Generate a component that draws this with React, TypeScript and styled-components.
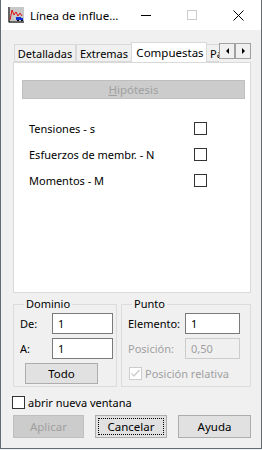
import styled, { createGlobalStyle } from "styled-components";

const Global = createGlobalStyle`
  html, body {
    margin: 0;
    padding: 0;
    background: #f0f0f0;
  }
  * {
    box-sizing: border-box;
  }
`;

const Window = styled.div`
  width: 262px;
  height: 449px;
  display: flex;
  flex-direction: column;
  background: #f0f0f0;
  border-left: 1px solid #646c73;
  border-right: 1px solid #646c73;
  border-bottom: 1px solid #646c73;
  font-family: "Noto Sans", "Open Sans", sans-serif;
  font-size: 11px;
  color: #000;
`;

const TitleBar = styled.div`
  height: 30px;
  flex: none;
  display: flex;
  align-items: center;
  background: #fff;
`;

const AppIcon = styled.svg`
  margin-left: 7px;
  flex: none;
`;

const Title = styled.div`
  margin-left: 6px;
  flex: 1;
  font-size: 11.5px;
  white-space: nowrap;
`;

const CaptionButton = styled.div`
  width: 46px;
  height: 30px;
  display: flex;
  align-items: center;
  justify-content: center;
  flex: none;
`;

const Content = styled.div`
  flex: 1;
  padding: 12px 10px 0 12px;
  display: flex;
  flex-direction: column;
`;

const TabHeader = styled.div`
  display: flex;
  height: 20px;
`;

const TabStrip = styled.div`
  width: 206px;
  overflow: hidden;
  display: flex;
  align-items: flex-end;
  padding-left: 1px;
`;

const Tab = styled.div<{ $active?: boolean; $w: number }>`
  flex: none;
  width: ${(p) => p.$w}px;
  height: ${(p) => (p.$active ? "21px" : "18px")};
  margin-bottom: ${(p) => (p.$active ? "-1px" : "0")};
  padding-top: ${(p) => (p.$active ? "2px" : "1px")};
  padding-left: ${(p) => (p.$active ? "2px" : "0")};
  text-align: center;
  background: ${(p) => (p.$active ? "#fff" : "#f0f0f0")};
  border: 1px solid #d9d9d9;
  border-bottom: ${(p) => (p.$active ? "none" : "1px solid #d9d9d9")};
  margin-left: ${(p) => (p.$active ? "-1px" : "0")};
  margin-right: ${(p) => (p.$active ? "-1px" : "0")};
  position: relative;
  z-index: ${(p) => (p.$active ? 1 : 0)};
  white-space: nowrap;
  line-height: 15px;
  font-size: ${(p) => (p.$active ? "11.5px" : "11px")};
`;

const ClippedTab = styled(Tab)`
  text-align: left;
  padding-left: 3px;
`;

const Spin = styled.div`
  display: flex;
  margin-top: 1px;
  height: 16px;
`;

const SpinButton = styled.div`
  width: 16px;
  height: 16px;
  background: #f0f0f0;
  border: 1px solid #a0a0a0;
  display: flex;
  align-items: center;
  justify-content: center;
`;

const Arrow = styled.div<{ $dir: "left" | "right" }>`
  width: 0;
  height: 0;
  border-top: 3px solid transparent;
  border-bottom: 3px solid transparent;
  ${(p) =>
    p.$dir === "left"
      ? "border-right: 3px solid #000;"
      : "border-left: 3px solid #000;"}
`;

const Panel = styled.div`
  width: 238px;
  height: 231px;
  background: #fff;
  border: 1px solid #d9d9d9;
  padding: 17px 5px 0 8px;
  display: flex;
  flex-direction: column;
`;

const Button = styled.div<{
  $w?: number;
  $h?: number;
  $disabled?: boolean;
  $focus?: boolean;
}>`
  width: ${(p) => (p.$w ? p.$w + "px" : "auto")};
  height: ${(p) => p.$h ?? 23}px;
  flex: none;
  display: flex;
  align-items: center;
  justify-content: center;
  background: ${(p) => (p.$disabled ? "#cccccc" : "#e1e1e1")};
  border: 1px solid ${(p) => (p.$disabled ? "#bfbfbf" : "#adadad")};
  color: ${(p) => (p.$disabled ? "#a0a0a0" : "#000")};
  font-size: 11.5px;
  position: relative;
  ${(p) =>
    p.$focus &&
    `
    &::after {
      content: "";
      position: absolute;
      inset: 2px;
      border: 1px dotted #000;
    }
  `}
`;

const Mnemonic = styled.span`
  text-decoration: underline;
`;

const CheckList = styled.div`
  margin-top: 23px;
  display: flex;
  flex-direction: column;
  gap: 13px;
`;

const CheckRow = styled.div`
  display: flex;
  align-items: center;
  height: 13px;
  padding-left: 7px;
`;

const CheckLabel = styled.span`
  width: 165px;
`;

const Box = styled.div<{ $disabled?: boolean }>`
  width: 13px;
  height: 13px;
  flex: none;
  border: 1px solid ${(p) => (p.$disabled ? "#cccccc" : "#333")};
  background: #fff;
  display: flex;
  align-items: center;
  justify-content: center;
`;

const Groups = styled.div`
  display: flex;
  gap: 4px;
  margin-top: 4px;
`;

const Group = styled.fieldset<{ $w: number }>`
  width: ${(p) => p.$w}px;
  height: 90px;
  margin: 0;
  padding: 2px 0 0 6px;
  border: 1px solid #dcdcdc;
  min-inline-size: 0;
  display: flex;
  flex-direction: column;
  gap: 4px;
`;

const Legend = styled.legend`
  padding: 0 2px;
  margin-left: 4px;
  line-height: 14px;
`;

const Field = styled.div`
  display: flex;
  align-items: center;
  height: 21px;
`;

const FieldLabel = styled.span<{ $w: number; $disabled?: boolean }>`
  width: ${(p) => p.$w}px;
  color: ${(p) => (p.$disabled ? "#a0a0a0" : "#000")};
`;

const Input = styled.div<{ $w: number; $disabled?: boolean }>`
  width: ${(p) => p.$w}px;
  height: 21px;
  border: 1px solid ${(p) => (p.$disabled ? "#cccccc" : "#7a7a7a")};
  background: ${(p) => (p.$disabled ? "#f0f0f0" : "#fff")};
  color: ${(p) => (p.$disabled ? "#a0a0a0" : "#000")};
  padding-left: 5px;
  line-height: 19px;
`;

const CheckField = styled.div<{ $disabled?: boolean }>`
  display: flex;
  align-items: center;
  gap: 3px;
  margin-top: 3px;
  margin-left: 1px;
  color: ${(p) => (p.$disabled ? "#a0a0a0" : "#000")};
`;

const BottomCheck = styled.div`
  display: flex;
  align-items: center;
  gap: 3px;
  margin-top: 8px;
  margin-left: -1px;
`;

const ButtonRow = styled.div`
  display: flex;
  gap: 11px;
  margin-top: 5px;
`;

function Check({ checked, disabled }: { checked?: boolean; disabled?: boolean }) {
  return (
    <Box $disabled={disabled}>
      {checked && (
        <svg width="11" height="11" viewBox="0 0 11 11">
          <path d="M1.5 5.5 L4 8 L9.5 2" fill="none" stroke="#cccccc" strokeWidth="1.3" />
        </svg>
      )}
    </Box>
  );
}

export default function App() {
  return (
    <>
      <Global />
      <Window>
        <TitleBar>
          <AppIcon width="16" height="16" viewBox="0 0 16 16">
            <rect x="0" y="0" width="16" height="16" fill="#c8c8c8" />
            <path d="M1 0 V15 H16" fill="none" stroke="#000" strokeWidth="1" />
            <path d="M2 13 L4 3 L6 8 L8 5 L10 9 L12 6 L14 9" fill="none" stroke="#e01010" strokeWidth="1" />
            <rect x="8" y="10" width="5" height="3" fill="#1030d0" />
            <rect x="11" y="11" width="4" height="2" fill="#1030d0" />
            <rect x="9" y="13" width="2" height="1" fill="#000" />
            <rect x="13" y="13" width="2" height="1" fill="#000" />
          </AppIcon>
          <Title>Línea de influe...</Title>
          <CaptionButton>
            <svg width="10" height="10" viewBox="0 0 10 10">
              <path d="M0 5.5 H10" stroke="#000" strokeWidth="1" />
            </svg>
          </CaptionButton>
          <CaptionButton>
            <svg width="10" height="10" viewBox="0 0 10 10">
              <rect x="0.5" y="0.5" width="9" height="9" fill="none" stroke="#cccccc" strokeWidth="1" />
            </svg>
          </CaptionButton>
          <CaptionButton>
            <svg width="11" height="11" viewBox="0 0 11 11">
              <path d="M0.5 0.5 L10.5 10.5 M10.5 0.5 L0.5 10.5" stroke="#000" strokeWidth="1" />
            </svg>
          </CaptionButton>
        </TitleBar>
        <Content>
          <TabHeader>
            <TabStrip>
              <Tab $w={62}>Detalladas</Tab>
              <Tab $w={56}>Extremas</Tab>
              <Tab $active $w={76}>Compuestas</Tab>
              <ClippedTab $w={14}>Pa</ClippedTab>
            </TabStrip>
            <Spin>
              <SpinButton>
                <Arrow $dir="left" />
              </SpinButton>
              <SpinButton>
                <Arrow $dir="right" />
              </SpinButton>
            </Spin>
          </TabHeader>
          <Panel>
            <Button $h={19} $disabled>
              <span>
                <Mnemonic>H</Mnemonic>ipótesis
              </span>
            </Button>
            <CheckList>
              <CheckRow>
                <CheckLabel>Tensiones - s</CheckLabel>
                <Check />
              </CheckRow>
              <CheckRow>
                <CheckLabel>Esfuerzos de membr. - N</CheckLabel>
                <Check />
              </CheckRow>
              <CheckRow>
                <CheckLabel>Momentos - M</CheckLabel>
                <Check />
              </CheckRow>
            </CheckList>
          </Panel>
          <Groups>
            <Group $w={104}>
              <Legend>Dominio</Legend>
              <Field>
                <FieldLabel $w={32}>De:</FieldLabel>
                <Input $w={61}>1</Input>
              </Field>
              <Field>
                <FieldLabel $w={32}>A:</FieldLabel>
                <Input $w={61}>1</Input>
              </Field>
              <Button $w={73} $h={21} style={{ marginLeft: 5 }}>
                Todo
              </Button>
            </Group>
            <Group $w={130}>
              <Legend>Punto</Legend>
              <Field>
                <FieldLabel $w={57}>Elemento:</FieldLabel>
                <Input $w={55}>1</Input>
              </Field>
              <Field>
                <FieldLabel $w={57} $disabled>
                  Posición:
                </FieldLabel>
                <Input $w={55} $disabled>
                  0,50
                </Input>
              </Field>
              <CheckField $disabled>
                <Check checked disabled />
                Posición relativa
              </CheckField>
            </Group>
          </Groups>
          <BottomCheck>
            <Check />
            abrir nueva ventana
          </BottomCheck>
          <ButtonRow>
            <Button $w={71} $disabled>
              Aplicar
            </Button>
            <Button $w={72} $focus>
              Cancelar
            </Button>
            <Button $w={73}>Ayuda</Button>
          </ButtonRow>
        </Content>
      </Window>
    </>
  );
}
